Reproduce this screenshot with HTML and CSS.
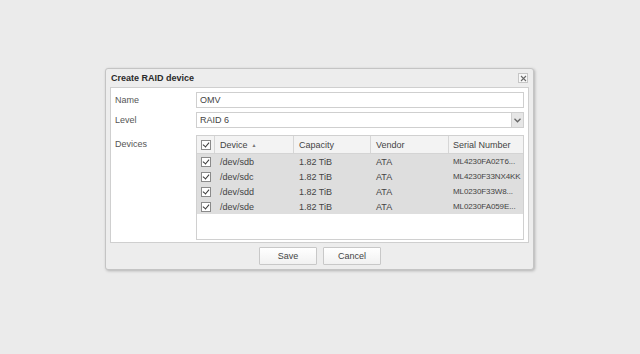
FILE: index.html
```html
<!DOCTYPE html>
<html>
<head>
<meta charset="utf-8">
<link rel="stylesheet" href="styles.css">
</head>
<body>
<div class="win">
  <div class="win-head">
    <span class="win-title">Create RAID device</span>
    <span class="win-close"><svg width="7" height="7" viewBox="0 0 7 7"><path d="M1 1L6 6M6 1L1 6" stroke="#6a6a6a" stroke-width="1.1"/></svg></span>
  </div>
  <div class="win-body">
    <div class="row">
      <label class="lbl">Name</label>
      <div class="field">OMV</div>
    </div>
    <div class="row">
      <label class="lbl">Level</label>
      <div class="field combo"><span class="combo-text">RAID 6</span><span class="trigger"><svg width="7" height="5" viewBox="0 0 7 5"><path d="M0.5 0.8L3.5 3.8L6.5 0.8" fill="none" stroke="#666" stroke-width="1.3"/></svg></span></div>
    </div>
    <div class="row devrow">
      <label class="lbl">Devices</label>
      <div class="grid">
        <div class="g-head">
          <div class="c c-chk"><span class="cb"></span></div>
          <div class="c c-dev">Device <span class="sort">▲</span></div>
          <div class="c c-cap">Capacity</div>
          <div class="c c-ven">Vendor</div>
          <div class="c c-ser">Serial Number</div>
        </div>
        <div class="g-row">
          <div class="c c-chk"><span class="cb"></span></div>
          <div class="c c-dev">/dev/sdb</div>
          <div class="c c-cap">1.82 TiB</div>
          <div class="c c-ven">ATA</div>
          <div class="c c-ser">ML4230FA02T6...</div>
        </div>
        <div class="g-row">
          <div class="c c-chk"><span class="cb"></span></div>
          <div class="c c-dev">/dev/sdc</div>
          <div class="c c-cap">1.82 TiB</div>
          <div class="c c-ven">ATA</div>
          <div class="c c-ser">ML4230F33NX4KK</div>
        </div>
        <div class="g-row">
          <div class="c c-chk"><span class="cb"></span></div>
          <div class="c c-dev">/dev/sdd</div>
          <div class="c c-cap">1.82 TiB</div>
          <div class="c c-ven">ATA</div>
          <div class="c c-ser">ML0230F33W8...</div>
        </div>
        <div class="g-row">
          <div class="c c-chk"><span class="cb"></span></div>
          <div class="c c-dev">/dev/sde</div>
          <div class="c c-cap">1.82 TiB</div>
          <div class="c c-ven">ATA</div>
          <div class="c c-ser">ML0230FA059E...</div>
        </div>
      </div>
    </div>
  </div>
  <div class="win-foot">
    <button class="btn">Save</button>
    <button class="btn">Cancel</button>
  </div>
</div>
</body>
</html>
```
FILE: styles.css
```css
html, body {
  margin: 0;
  padding: 0;
  background: #ebebeb;
  font-family: "Liberation Sans", Arial, sans-serif;
  font-size: 9px;
  color: #444;
}
body {
  padding: 68px 0 0 105px;
  height: 354px;
  box-sizing: border-box;
}
.win {
  width: 429px;
  height: 202px;
  box-sizing: border-box;
  border: 1px solid #c4c4c4;
  border-radius: 3px;
  background: #ededed;
  box-shadow: 1px 1px 3px rgba(0,0,0,0.25);
  padding: 0 4px;
  display: flex;
  flex-direction: column;
}
.win-head {
  height: 18px;
  display: flex;
  align-items: center;
  justify-content: space-between;
  padding: 0 0 0 1px;
}
.win-title {
  font-weight: bold;
  color: #2a2a2a;
  font-size: 9px;
}
.win-close {
  width: 8px;
  height: 8px;
  border: 1px solid #c6c6c6;
  background: #f8f8f8;
  display: flex;
  align-items: center;
  justify-content: center;
  margin-right: 1px;
}
.win-body {
  background: #fff;
  border: 1px solid #cfcfcf;
  height: 156px;
  box-sizing: border-box;
  padding: 4px 4px 0 4px;
  display: flex;
  flex-direction: column;
  gap: 4px;
}
.row {
  display: flex;
  align-items: center;
}
.lbl {
  width: 81px;
  flex: none;
  color: #555;
}
.field {
  flex: 1;
  min-width: 0;
  height: 16px;
  box-sizing: border-box;
  border: 1px solid #cfcfcf;
  padding: 0 3px;
  line-height: 14px;
  color: #444;
  background: #fff;
}
.combo {
  display: flex;
  padding-right: 0;
}
.combo-text { flex: 1; }
.trigger {
  width: 11px;
  height: 14px;
  background: #e6e6e6;
  border-left: 1px solid #cfcfcf;
  display: flex;
  align-items: center;
  justify-content: center;
}
.devrow {
  align-items: flex-start;
  margin-top: 3px;
}
.devrow .lbl {
  padding-top: 4px;
}
.grid {
  flex: 1;
  min-width: 0;
  height: 105px;
  box-sizing: border-box;
  border: 1px solid #d0d0d0;
  background: #fff;
  overflow: hidden;
}
.g-head, .g-row {
  display: flex;
}
.g-head {
  height: 17px;
  background: #f3f3f3;
  border-bottom: 1px solid #d4d4d4;
}
.g-head .c {
  border-right: 1px solid #d6d6d6;
}
.g-head .c-ser { border-right: 0; }
.g-row {
  height: 15px;
  background: #dedede;
}
.c {
  box-sizing: border-box;
  display: flex;
  align-items: center;
  padding-left: 5px;
  white-space: nowrap;
  overflow: hidden;
  min-width: 0;
  flex: none;
}
.c-chk { width: 18px; padding-left: 4px; }
.c-dev { width: 79px; }
.c-cap { width: 77px; }
.c-ven { width: 78px; }
.c-ser { flex: 1 1 0; padding-left: 4px; }
.g-row .c-ser { font-size: 8px; letter-spacing: -0.1px; }
.sort {
  font-size: 5px;
  color: #777;
  margin-left: 4px;
}
.cb {
  width: 8px;
  height: 8px;
  flex: none;
  border: 1px solid #8a8a8a;
  background: #fff;
  position: relative;
}
.cb::after {
  content: "";
  position: absolute;
  left: 2px;
  top: 0px;
  width: 3px;
  height: 5px;
  border: solid #3a3a3a;
  border-width: 0 1.5px 1.5px 0;
  transform: rotate(40deg);
}
.win-foot {
  flex: 1;
  display: flex;
  justify-content: center;
  align-items: center;
  gap: 6px;
  padding-left: 1px;
}
.btn {
  width: 58px;
  height: 18px;
  border: 1px solid #c8c8c8;
  background: linear-gradient(#ffffff, #f1f1f1);
  font-family: "Liberation Sans", Arial, sans-serif;
  font-size: 9px;
  color: #444;
  padding: 0;
  border-radius: 1px;
}
```
